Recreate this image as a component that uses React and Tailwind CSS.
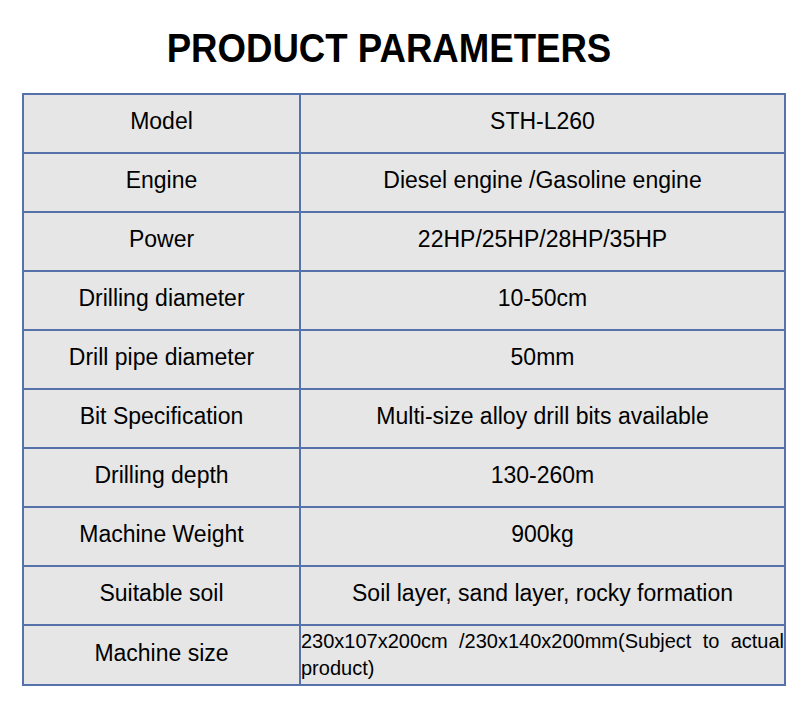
import React from 'react';

const rows = [
  ['Model', 'STH-L260'],
  ['Engine', 'Diesel engine /Gasoline engine'],
  ['Power', '22HP/25HP/28HP/35HP'],
  ['Drilling diameter', '10-50cm'],
  ['Drill pipe diameter', '50mm'],
  ['Bit Specification', 'Multi-size alloy drill bits available'],
  ['Drilling depth', '130-260m'],
  ['Machine Weight', '900kg'],
  ['Suitable soil', 'Soil layer, sand layer, rocky formation'],
];

export default function App() {
  return (
    <div className="w-[805px] h-[701px] bg-white font-['Liberation_Sans',Arial,sans-serif] text-black">
      {/* Title */}
      <div className="pt-[26px] pr-[28px] h-[93px] flex justify-center">
        <h1 className="text-[40px] font-bold leading-[44px] whitespace-nowrap scale-x-[0.915]">
          PRODUCT PARAMETERS
        </h1>
      </div>

      {/* Table */}
      <table className="ml-[22px] w-[764px] border-collapse bg-[#e6e6e6] text-[23px]">
        <tbody>
          {rows.map(([name, value]) => (
            <tr key={name} className="h-[59px]">
              <td className="w-[277px] p-0 pb-[4px] border-2 border-[#5672aa] text-center">{name}</td>
              <td className="p-0 pb-[4px] border-2 border-[#5672aa] text-center">{value}</td>
            </tr>
          ))}
          <tr className="h-[60px]">
            <td className="w-[277px] p-0 pb-[4px] border-2 border-[#5672aa] text-center">Machine size</td>
            <td className="p-0 border-2 border-[#5672aa] text-[20px] leading-[27px] text-justify align-middle">
              230x107x200cm /230x140x200mm(Subject to actual product)
            </td>
          </tr>
        </tbody>
      </table>
    </div>
  );
}
